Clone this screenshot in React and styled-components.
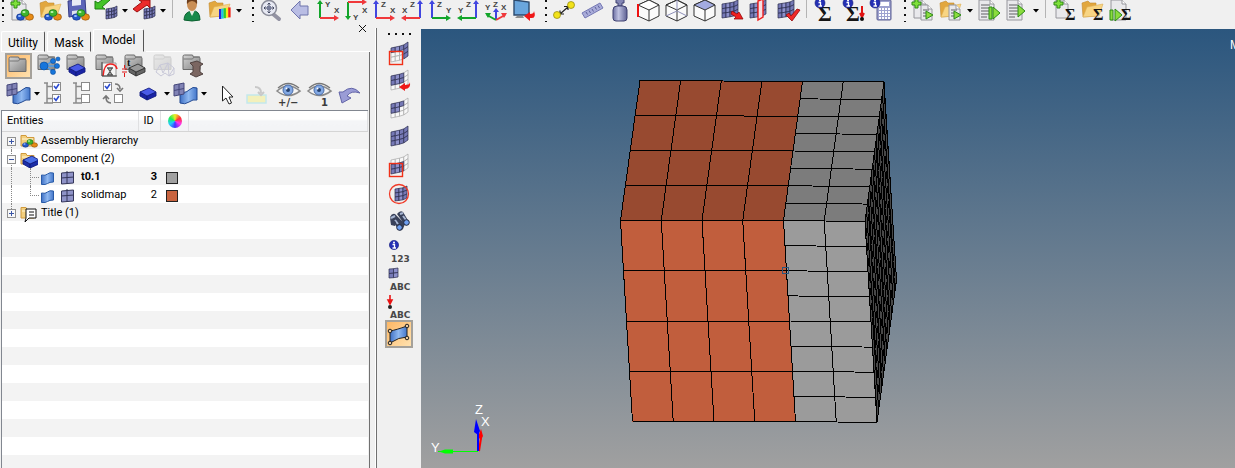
import { useState } from "react";
import styled, { createGlobalStyle, css } from "styled-components";

/* ---------- icon parts ---------- */

function Mesh({ x = 5, y = 1, w = 17, h = 14, drop = 6, cols = 4, rows = 3, open = () => false, fill = "#7679b6" }) {
    const point = (i, j) => {
        const t = i / cols;
        const lift = t < 0.7 ? t * 0.6 : 0.42 + (t - 0.7) * 1.93;
        return `${x + w * t},${y + (h * j) / rows + drop * (1 - lift)}`;
    };
    const cells = [];
    for (let i = 0; i < cols; i++) {
        for (let j = 0; j < rows; j++) {
            cells.push({ i, j, empty: open(i, j) });
        }
    }
    cells.sort((a, b) => b.empty - a.empty);
    return (
        <g strokeWidth="0.7">
            {cells.map(({ i, j, empty }) => (
                <polygon
                    key={`${i}-${j}`}
                    points={[point(i, j), point(i + 1, j), point(i + 1, j + 1), point(i, j + 1)].join(" ")}
                    fill={empty ? "#f8f8f8" : i === 1 ? "#8e91cb" : fill}
                    stroke={empty ? "#a6a6a6" : "#2a2b4c"}
                />
            ))}
        </g>
    );
}

function Sheet({ x = 4, y = 0, w = 14, h = 20 }) {
    return (
        <g>
            <path d={`M${x} ${y}h${w - 4}l4 4v${h - 4}h${-w}z`} fill="#e9e9ec" stroke="#96969c" />
            <path d={`M${x + w - 4} ${y}v4h4`} fill="#fff" stroke="#96969c" />
        </g>
    );
}

function Lines({ x = 6, y = 7, w = 8, n = 4 }) {
    return Array.from({ length: n }, (_, i) => (
        <path key={i} d={`M${x} ${y + i * 3}h${i === n - 1 ? w - 3 : w}`} stroke="#77777c" strokeWidth="1.2" />
    ));
}

function GoldFolder({ x = 4, y = 0 }) {
    return (
        <g transform={`translate(${x} ${y})`}>
            <path d="M1 17L0 3l6-2 2 2h6v13z" fill="#e2a73e" stroke="#c28a2e" strokeWidth=".6" />
            <path d="M1 17L5 7l16-3-4 12z" fill="#f8d583" stroke="#dcae55" strokeWidth=".6" />
        </g>
    );
}

function GreenPlus({ x = 3, y = -1 }) {
    return (
        <path
            transform={`translate(${x} ${y})`}
            d="M3 0h3v3h3v3H6v3H3V6H0V3h3z"
            fill="#7fe03a"
            stroke="#2e8a14"
        />
    );
}

function Balls({ x = 17, y = 13, r = 4 }) {
    return (
        <g strokeWidth=".6">
            <ellipse cx={x - 4.5} cy={y + r} rx={r} ry={r - 0.8} fill="#2457c9" stroke="#0c2c80" />
            <ellipse cx={x + 4.5} cy={y + r} rx={r} ry={r - 0.8} fill="#e88c16" stroke="#8b4c05" />
            <ellipse cx={x} cy={y} rx={r} ry={r - 0.6} fill="#3fb52f" stroke="#176a10" />
            <ellipse cx={x - 1} cy={y - 1} rx={r / 2.6} ry={r / 4} fill="#c3f3b5" stroke="none" />
            <ellipse cx={x - 5.5} cy={y + r - 1} rx={r / 2.6} ry={r / 4} fill="#9cc0ff" stroke="none" />
        </g>
    );
}

function Sigma({ x = 14, y = 20, size = 16 }) {
    return (
        <text x={x} y={y} fontFamily="Liberation Serif, serif" fontWeight="bold" fontSize={size} fill="#151515">
            Σ
        </text>
    );
}

function Info({ x = 8, y = 3, r = 5 }) {
    return (
        <g>
            <circle cx={x} cy={y} r={r} fill="#2430b4" stroke="#10187a" strokeWidth=".6" />
            <path d={`M${x - 1.5} ${y - 0.5}h2v3.5m-2 0h3.5`} stroke="#fff" strokeWidth="1.3" fill="none" />
            <circle cx={x} cy={y - 2.6} r="1" fill="#fff" />
        </g>
    );
}

function GreenPlay({ x = 15, y = 10, h = 12 }) {
    return <path d={`M${x} ${y}l7 ${h / 2}l-7 ${h / 2}z`} fill="#8bdc3d" stroke="#2c8a17" />;
}

function Block({ x = 6, y = 9, top = "#4a5be8", side = "#1a23a5", line = "#111c80" }) {
    return (
        <g transform={`translate(${x} ${y})`} stroke={line} strokeWidth=".9" strokeLinejoin="round">
            <path d="M0 5l7 4v4L0 9z" fill={side} />
            <path d="M7 9l9-4v4l-9 4z" fill={side} />
            <path d="M0 5l9-4 7 4-9 4z" fill={top} />
        </g>
    );
}

function GrayFolder({ faded }) {
    return (
        <g opacity={faded ? 0.25 : 1}>
            <path d="M5 17.5V4.5q0-1.500 1.500-1.500h8l1 2h5q1.500 0 1.500 1.500v11z" fill="url(#steel)" stroke="#6b6b6b" />
            <path d="M5.500 7h9l1.500-2h6" fill="none" stroke="#777" />
        </g>
    );
}

const AXIS = { X: "#f0383b", Y: "#12a52a", Z: "#4146e0" };

function Axes({ up, side, flip, hang }) {
    const x0 = flip ? 23 : 7;
    const dir = flip ? -1 : 1;
    const y0 = hang ? 2 : 18;
    const end = hang ? 20 : 0;
    const back = hang ? -4 : 4;
    return (
        <g strokeWidth="2" fontFamily="Liberation Sans, sans-serif" fontWeight="bold" fontSize="8">
            <path d={`M${x0} ${y0}V${end - back / -2}`} stroke={AXIS[up]} />
            <path d={`M${x0 - 3} ${end + back}h6l-3 ${-back}z`} fill={AXIS[up]} />
            <path d={`M${x0} ${y0}h${dir * 16}`} stroke={AXIS[side]} />
            <path d={`M${x0 + dir * 14} ${y0 - 3}v6l${dir * 5}-3z`} fill={AXIS[side]} />
            <text x={flip ? 13 : x0 + 5} y={hang ? 20 : 7} fill="#444">{up}</text>
            <text x={flip ? 5 : x0 + 14} y="13" fill="#444">{side}</text>
        </g>
    );
}

function Cube({ top = "none", left, inner }) {
    return (
        <g fill="#fafafa" stroke="#333" strokeLinejoin="round">
            <path d="M4 5l11-5 10 5v11l-10 5-11-5z" />
            <path d="M4 5l11-5 10 5-10 5z" fill={top} />
            <path d="M15 10v11" />
            {inner && <path d="M4 16l11-5 10 5M15 0v10" stroke="#8d8fb8" fill="none" />}
            {left && <path d="M4 4v13" stroke="#f01010" strokeWidth="2" />}
        </g>
    );
}

function Eye({ label }) {
    return (
        <g>
            <path d="M3 11Q14 1 26 11Q14 20 3 11z" fill="#f4f4f4" stroke="#8b8b8b" strokeWidth="1.6" />
            <path d="M4 8Q14-1 25 8" fill="none" stroke="#777" strokeWidth="1.3" />
            <circle cx="14" cy="10" r="5" fill="#83a9e4" stroke="#496ca8" />
            <circle cx="14" cy="10" r="2" fill="#26426f" />
            <circle cx="12.5" cy="8.5" r="1" fill="#fff" />
            <text x={label === "1" ? 16 : 4} y="26" fontSize="10" fontWeight="bold" fontFamily="DejaVu Sans, sans-serif" fill="#3c3c3c">
                {label}
            </text>
        </g>
    );
}

function CheckBox({ x, y, on }) {
    return (
        <g>
            <rect x={x} y={y} width="8" height="8" fill="#fff" stroke="#8a8a8a" />
            {on && <path d={`M${x + 1.5} ${y + 3.5}l2 2.500 3-4.500`} stroke="#2a4ad0" strokeWidth="1.600" fill="none" />}
        </g>
    );
}

function CheckTree({ on }) {
    return (
        <g>
            <path d="M6 3v20M6 6.5h7M6 18.5h7M3 3h4M3 23h9" stroke="#8a8a8a" strokeWidth="1.5" fill="none" />
            <CheckBox x={11.5} y={2.5} on={on} />
            <CheckBox x={11.5} y={14.5} on={on} />
        </g>
    );
}

function Surface() {
    return (
        <g>
            <path d="M9 11q5 3 9-1t8-2v12q-4-1-8 2t-9 1z" fill="url(#sky)" stroke="#234a93" />
            <path d="M3 5l10-2v11l-10 2zM8 4v11M3 10.5l10-2" fill="#8183b5" stroke="#45477a" />
        </g>
    );
}

function Caption({ x, y, children }) {
    return (
        <text x={x} y={y} fontSize="9" fontWeight="bold" fontFamily="DejaVu Sans, sans-serif" fill="#484848">
            {children}
        </text>
    );
}

/* ---------- toolbar icons ---------- */

const icons = {
    newModel: <><Sheet /><GreenPlus /><Balls /></>,
    openModel: <><GoldFolder /><Balls /></>,
    saveModel: (
        <>
            <path d="M4 1L21-1l1 15-17 3z" fill="#5c64b8" stroke="#353b84" />
            <path d="M8-1h9v6l-9 1z" fill="#e8eaf5" />
            <path d="M8 11l8-1v4l-8 1z" fill="#dfe2ef" />
            <Balls />
        </>
    ),
    importMesh: (
        <>
            <Mesh x={14} y={6} w={11} h={10} drop={3} />
            <path d="M3 9V1l3 2 8-6 4 3-8 7 3 2z" fill="#43c327" stroke="#1c7d10" />
        </>
    ),
    exportMesh: (
        <>
            <Mesh x={14} y={6} w={11} h={10} drop={3} />
            <path d="M3 9l9-7-3-2h11v8l-3-3-10 7z" fill="#ec2b2b" stroke="#9b1010" />
        </>
    ),
    user: (
        <>
            <path d="M6 20q0-8 8-9t8 9q-8 2-16 0z" fill="#178a4a" stroke="#0b6030" />
            <path d="M11 10l3 6 3-6z" fill="#e6efe6" />
            <ellipse cx="14" cy="4" rx="5" ry="7" fill="#c98e55" />
            <path d="M9 4q-1-7 5-7t5 7q-2-3-5-3t-5 3z" fill="#6b3d1c" />
        </>
    ),
    results: (
        <>
            <GoldFolder x={3} />
            {["#2722d8", "#17c8e8", "#29cc34", "#f5ea1a", "#f02015"].map((c, i) => (
                <path key={c} d={`M${14.2 + i * 2.3} ${9 - i * 0.4}v10`} stroke={c} strokeWidth="2.4" />
            ))}
        </>
    ),
    zoomFit: (
        <>
            <path d="M16 14l6 5" stroke="#9393a3" strokeWidth="4" strokeLinecap="round" />
            <circle cx="12" cy="8" r="7.5" fill="#e7e9f3" stroke="#8a8c99" strokeWidth="1.5" />
            <path d="M12 3v10M7 8h10M10.500 4.500L12 3l1.500 1.500M10.500 11.500L12 13l1.500-1.500M8.500 6.500L7 8l1.500 1.500M15.500 6.500L17 8l-1.500 1.500" stroke="#444a63" fill="none" />
            <rect x="10" y="6" width="4" height="4" fill="#777d99" />
        </>
    ),
    back: <path d="M6 10L15 1v5h8v9h-8v4z" fill="#b9bde4" stroke="#6f74ac" />,
    xy: <Axes up="Y" side="X" />,
    xyDown: <Axes up="Y" side="X" hang />,
    xz: <Axes up="Z" side="X" />,
    xzFlip: <Axes up="Z" side="X" flip />,
    yz: <Axes up="Z" side="Y" />,
    yzFlip: <Axes up="Z" side="Y" flip />,
    iso: (
        <g strokeWidth="2" fontFamily="Liberation Sans, sans-serif" fontWeight="bold" fontSize="8">
            <path d="M15 20V10" stroke={AXIS.Z} />
            <path d="M12 12h6l-3-4z" fill={AXIS.Z} />
            <path d="M15 20L6 15" stroke={AXIS.Y} />
            <path d="M4 13l6 0-3 5z" fill={AXIS.Y} />
            <path d="M15 20l9-5" stroke={AXIS.X} />
            <path d="M26 13l-6 0 3 5z" fill={AXIS.X} />
            <text x="4" y="10" fill="#444">Y</text>
            <text x="12" y="7" fill="#444">Z</text>
            <text x="20" y="10" fill="#444">X</text>
        </g>
    ),
    monitor: (
        <>
            <path d="M5 0l15 2v13L5 15z" fill="#6aa6dd" stroke="#2d4a6d" strokeWidth="1.4" />
            <path d="M8 16h6l1 2H6z" fill="#8c8c8c" />
            <path d="M15 16l6-4v2q4 0 4-3 3 8-4 7v3z" fill="#f01818" />
        </>
    ),
    distance: (
        <>
            <path d="M10 14l8-7M10 10.5v3.5h4M14 6.5h4V10" stroke="#222" fill="none" strokeWidth="1.2" />
            <circle cx="7" cy="15" r="3.5" fill="#f2e21a" stroke="#8d840a" strokeWidth=".7" />
            <circle cx="21" cy="5" r="3.5" fill="#f2e21a" stroke="#8d840a" strokeWidth=".7" />
        </>
    ),
    ruler: (
        <>
            <path d="M4 13L22 3l3 5L7 18z" fill="#a9acd9" stroke="#7578b4" />
            <path d="M8 12l1.500 2.500M11 10.500l1.500 2.500M14 9l1.500 2.500M17 7l1.500 2.500M20 5.500L21.500 8" stroke="#5c5f9c" />
        </>
    ),
    mass: (
        <>
            <path d="M10-1h8v4h-2v3h-4V3h-2z" fill="#8487b4" stroke="#3e4170" />
            <path d="M7 10q0-4 4-4h6q4 0 4 4v8q0 3-3 3h-8q-3 0-3-3z" fill="url(#iron)" stroke="#3e4170" />
        </>
    ),
    cubeEdge: <Cube left top="#fff" />,
    cubeWire: <Cube inner top="none" />,
    cubeShade: <Cube top="#a3abe0" />,
    meshExport: (
        <>
            <Mesh x={4} y={0} w={16} h={14} drop={4} />
            <path d="M14 11l5 3 2-2 4 7-9 0 2-2-5-3z" fill="#f02020" stroke="#930b0b" strokeWidth=".8" />
        </>
    ),
    meshSplit: (
        <>
            <Mesh x={4} y={0} w={16} h={14} drop={4} />
            <path d="M12 1l5-2v18l-5 3z" fill="#f6dfe3" stroke="#f02020" strokeWidth="1.4" />
        </>
    ),
    meshCheck: (
        <>
            <Mesh x={4} y={0} w={16} h={14} drop={4} />
            <path d="M12 15l3-2 2 3 6-7 3 1-8 11z" fill="#f02828" stroke="#930b0b" strokeWidth=".8" />
        </>
    ),
    infoSum: <><Sigma x={6} y={21} size={21} /><Info /></>,
    infoSumAlert: (
        <>
            <Sigma x={6} y={21} size={21} />
            <Info />
            <path d="M22 6v10m-2-3l2 4 2-4" stroke="#e01414" strokeWidth="2" fill="none" />
            <circle cx="22" cy="19" r="2" fill="#111" />
        </>
    ),
    calc: (
        <>
            <rect x="9" y="0" width="14" height="20" rx="1" fill="#9ea2cf" stroke="#5d6093" />
            <rect x="11" y="2" width="10" height="4" fill="#fff" />
            <path d="M11 9h11M11 12h11M11 15h11M11 18h11" stroke="#fff" strokeWidth="2" strokeDasharray="2 1" />
            <Info x={7} y={3} r={5} />
        </>
    ),
    sheetNewRun: <><Sheet x={5} w={12} h={18} /><Sheet x={12} y={5} w={11} h={15} /><Lines x={14} y={10} w={6} n={3} /><GreenPlus x={3} y={-1} /><GreenPlay x={17} y={11} h={8} /></>,
    sheetOpenRun: <><GoldFolder x={3} /><Sheet x={12} y={5} w={11} h={15} /><Lines x={14} y={10} w={6} n={3} /><GreenPlay x={17} y={11} h={8} /></>,
    runPause: <><Sheet x={4} w={15} h={20} /><Lines x={6} y={5} w={9} n={5} /><path d="M14 7h3v12h-3z" fill="#8bdc3d" stroke="#2c8a17" /><GreenPlay x={18} y={7} /></>,
    run: <><Sheet x={4} w={15} h={20} /><Lines x={6} y={5} w={9} n={5} /><GreenPlay x={15} y={5} /></>,
    sumNew: <><Sheet x={5} w={12} h={18} /><GreenPlus x={3} y={-1} /><Sigma /></>,
    sumOpen: <><GoldFolder x={3} /><Sigma /></>,
    sumRun: <><Sheet x={4} w={15} h={20} /><path d="M3 10h3v10H3z" fill="#8bdc3d" stroke="#2c8a17" /><GreenPlay x={8} y={9} /><Sigma /></>,
};

/* ---------- browser icons ---------- */

const viewIcons = {
    component: <g transform="translate(0 2)"><GrayFolder /></g>,
    connect: (
        <>
            <GrayFolder />
            <path d="M12 14l8-5M12 14l12 0M12 14l8 6" stroke="#4b9be8" strokeWidth="1.5" />
            {[[11, 14, 4], [20, 9, 2.5], [24, 14, 2.5], [20, 20, 2.5], [25, 7, 2]].map(([x, y, r]) => (
                <circle key={`${x}${y}`} cx={x} cy={y} r={r} fill="#1675dc" stroke="#0c4b99" strokeWidth=".6" />
            ))}
        </>
    ),
    solid: <><GrayFolder /><Block x={7} y={11} /></>,
    material: (
        <>
            <GrayFolder />
            <path d="M11 24V11h14v13z" fill="#f5f5f5" stroke="#999" />
            <path d="M12 24q1-12 7-12t7 5" fill="none" stroke="#f02020" strokeWidth="1.6" />
            <path d="M11 10v14h15" fill="none" stroke="#444" />
            <path d="M16 23h6M16 16h6M17 16l4 7M21 16l-4 7" stroke="#555" strokeWidth="1.3" />
        </>
    ),
    property: (
        <>
            <GrayFolder />
            <Block x={9} y={11} top="#9a9a9a" side="#666" line="#333" />
            <text x="7" y="14" fontSize="10" fontWeight="bold" fontFamily="Liberation Serif, serif" fill="#111">t</text>
            <path d="M2 17h5M2 20h5M4.500 13v3M4.500 21v4" stroke="#e01818" />
        </>
    ),
    loads: (
        <>
            <GrayFolder faded />
            <path d="M7 20l4-7 8-2 6 5v6l-5 2-4-3-4 3zM11 13l3 8 5-10 1 13 5-8" fill="none" stroke="#c8c8d8" />
        </>
    ),
    beam: (
        <>
            <GrayFolder />
            <path d="M12 11l7-2 6 3-3 2v6l3 2-7 3-6-3 3-2v-6z" fill="#7b6661" stroke="#514341" />
        </>
    ),
};

const sideIcons = [
    ["Mask elements", <><Mesh x={6} y={2} open={(i, j) => i < 3 && j > 0} /><rect x="4.5" y="11.5" width="13" height="13" fill="none" stroke="#f03018" strokeWidth="1.4" /></>],
    ["Reverse mask", <><Mesh x={6} y={2} open={(i, j) => i > 2 || j > 1} /><path d="M14 19l6-4v2q5 0 5-3 1 7-5 7v2z" fill="#f01818" /></>],
    ["Unmask adjacent", <Mesh x={6} y={2} open={(i, j) => i > 2 || j > 1 || (i === 2 && j > 0)} />],
    ["Unmask all", <Mesh x={6} y={2} />],
    ["Unmask shown", <><Mesh x={6} y={2} open={(i, j) => j < 1 || i > 2} /><rect x="4.5" y="11.5" width="13" height="13" fill="none" stroke="#f03018" strokeWidth="1.4" /></>],
    ["Spherical clipping", <><Mesh x={10} y={6} w={12} h={12} drop={3} cols={3} /><circle cx="14" cy="14" r="9.5" fill="none" stroke="#f03a28" strokeWidth="1.3" /></>],
    [
        "Find",
        <>
            <path d="M5 9q2-4 5-3l10 10-2 5q-3 3-5 0zM12 6q3-4 6-2l6 10q0 4-4 3z" fill="#39415a" />
            <path d="M6 10l4-2M15 6l3-1M10 12l3 4M18 8l3 4" stroke="#a8b6d3" strokeWidth="2" />
            <path d="M5 10l1 7 4 1 1-4z" fill="#39415a" />
            <circle cx="21.5" cy="14.5" r="2.800" fill="#6f9ff0" stroke="#20263a" />
            <circle cx="14.5" cy="19.5" r="2.800" fill="#6f9ff0" stroke="#20263a" />
        </>,
    ],
    ["Numbers", <><Info x={9} y={9} r={4.6} /><Caption x="6" y="26">123</Caption></>],
    ["Element handles", <><Mesh x={4} y={4} w={9} h={9} drop={1} cols={2} rows={2} /><Caption x="5" y="26">ABC</Caption></>],
    ["Load handles", <><path d="M5 3v8M3 8l2 4 2-4z" stroke="#e81414" strokeWidth="1.6" fill="#e81414" /><circle cx="5" cy="15" r="2" fill="#222" /><Caption x="5" y="26">ABC</Caption></>],
    [
        "Fixed points",
        <>
            <path d="M5 11q6-1 17-5v11q-8 0-17 6z" fill="url(#sky)" stroke="#222" />
            {[[5, 11], [22, 6], [22, 18], [5, 23]].map(([x, y]) => (
                <circle key={`${x}${y}`} cx={x} cy={y} r="1.8" fill="#e9c9a0" stroke="#222" />
            ))}
        </>,
    ],
];

/* ---------- toolbar contents ---------- */

const toolGroups = [
    ["newModel", "openModel", "saveModel", "importMesh", "menu", "exportMesh", "menu", "line", "user", "results", "menu"],
    ["zoomFit", "back", "xy", "xyDown", "xz", "xzFlip", "yz", "yzFlip", "iso", "monitor"],
    ["distance", "ruler", "mass", "cubeEdge", "cubeWire", "cubeShade", "meshExport", "meshSplit", "meshCheck", "line", "infoSum", "infoSumAlert", "calc"],
    ["sheetNewRun", "sheetOpenRun", "menu", "runPause", "run", "menu", "line", "sumNew", "sumOpen", "sumRun"],
];

function Arrow() {
    return (
        <svg width="6" height="4" viewBox="0 0 6 4">
            <path d="M0 0h6L3 3.500z" fill="#000" />
        </svg>
    );
}

function Tool({ name }) {
    if (name === "line") return <Separator />;
    if (name === "menu") return <MenuButton aria-label="More options"><Arrow /></MenuButton>;
    return (
        <ToolButton aria-label={name}>
            <svg width="28" height="22" viewBox="0 0 28 22" fill="none">{icons[name]}</svg>
        </ToolButton>
    );
}

/* ---------- model tree ---------- */

function TreeFolder({ kind }) {
    return (
        <svg width="18" height="18" viewBox="0 0 18 18" fill="none">
            <path d="M1 14V3.500h5l1 2h7V14z" fill="#f3cf7d" stroke="#d09a3c" />
            <path d="M2 7h11" stroke="#fbe9b8" strokeWidth="1.5" />
            {kind === "assembly" && <Balls x={10} y={10} r={3} />}
            {kind === "component" && <Block x={3} y={5} top="#4a6fe8" side="#1c2fa8" />}
            {kind === "title" && <path d="M6 5h10v9H9l-4 4 1-4zM9 8h5M9 11h5" fill="#fff" stroke="#111" />}
        </svg>
    );
}

function Group({ kind, label, open, first, last, onToggle }) {
    return (
        <tr>
            <td>
                <TreeCell>
                    <Guide $first={first} $last={last}>
                        <Expander aria-label={`Toggle ${label}`} onClick={onToggle}>
                            <svg width="7" height="7" viewBox="0 0 7 7" shapeRendering="crispEdges">
                                <path d={open ? "M1 3h5v1H1z" : "M1 3h5v1H1zM3 1h1v5H3z"} fill="#3a55a5" />
                            </svg>
                        </Expander>
                    </Guide>
                    <TreeFolder kind={kind} />
                    <Label>{label}</Label>
                </TreeCell>
            </td>
            <td /><td /><td />
        </tr>
    );
}

function Part({ name, id, color, active, last }) {
    return (
        <tr>
            <td>
                <TreeCell>
                    <Guide />
                    <Branch $last={last} />
                    <svg width="38" height="18" viewBox="0 0 38 18" fill="none">
                        <path d="M1.500 7q4 1 6-1t6-1v9q-4 0-6 1.500t-6 1z" fill="url(#sky)" stroke="#2a5ca8" />
                        <path d="M21.500 5l12-1v11l-12 1zM27 3v13M21 10l13-1" fill="#8f93c8" stroke="#34365a" />
                    </svg>
                    <Label $bold={active}>{name}</Label>
                </TreeCell>
            </td>
            <IdCell $bold={active}>{id}</IdCell>
            <td><Swatch $color={color} /></td>
            <td />
        </tr>
    );
}

const parts = [
    { name: "t0.1", id: 3, color: "#a0a0a0", active: true },
    { name: "solidmap", id: 2, color: "#c86440" },
];

function ModelTree() {
    const [open, setOpen] = useState(true);
    return (
        <TreeBox>
            <TreeTable>
                <colgroup>
                    <Column $width="136px" />
                    <Column $width="22px" />
                    <Column $width="28px" />
                    <Column />
                </colgroup>
                <thead>
                    <tr>
                        <th>Entities</th>
                        <th>ID</th>
                        <th aria-label="Color"><ColorWheel /></th>
                        <th aria-label="Other" />
                    </tr>
                </thead>
                <tbody>
                    <Group kind="assembly" label="Assembly Hierarchy" first />
                    <Group kind="component" label="Component (2)" open={open} onToggle={() => setOpen(!open)} />
                    {open && parts.map((p, i) => <Part key={p.id} {...p} last={i === parts.length - 1} />)}
                    <Group kind="title" label="Title (1)" last />
                </tbody>
            </TreeTable>
        </TreeBox>
    );
}

/* ---------- 3D scene ---------- */

const mix = (a, b, t) => [a[0] + (b[0] - a[0]) * t, a[1] + (b[1] - a[1]) * t];

function Face({ corners, cols, rows, fill }) {
    const [a, b, c, d] = corners;
    const lines = [];
    for (let i = 0; i <= cols; i++) lines.push([mix(a, b, i / cols), mix(d, c, i / cols)]);
    for (let j = 0; j <= rows; j++) lines.push([mix(a, d, j / rows), mix(b, c, j / rows)]);
    return (
        <g shapeRendering="crispEdges">
            <polygon points={corners.join(" ")} fill={fill} />
            <path d={lines.map(([p, q]) => `M${p}L${q}`).join("")} stroke="#000" fill="none" />
        </g>
    );
}

function Scene() {
    return (
        <svg width="814" height="439" viewBox="421 29 814 439">
            <Face corners={[[884, 82], [896.5, 280], [877, 422], [865, 221]]} cols={13} rows={12} fill="#484848" />
            <Face corners={[[640, 80.5], [802.5, 81.5], [783.5, 220.5], [620.5, 220.5]]} cols={4} rows={4} fill="#984a30" />
            <Face corners={[[802.5, 81.5], [884, 82], [865, 221.5], [783.5, 220.5]]} cols={2} rows={8} fill="#7c7c7c" />
            <Face corners={[[620.5, 220.5], [783.5, 220.5], [795.5, 421.5], [632.5, 421.5]]} cols={4} rows={4} fill="#c15e3d" />
            <Face corners={[[783.5, 220.5], [865, 221.5], [877, 422.5], [795.5, 421.5]]} cols={2} rows={8} fill="#9b9b9b" />
            <rect x="782.5" y="267.5" width="6" height="6" fill="none" stroke="#2b567e" />
            <g fill="none">
                <path d="M438 451h40v1h-40z" fill="#0f0" />
                <path d="M439 451.5l6-2h8v4h-8z" fill="#0f0" />
                <path d="M479 451l2-13" stroke="#f00" strokeWidth="2" />
                <path d="M478 437l3-8 2 7-2 4z" fill="#f00" />
                <path d="M478 451V431" stroke="#00f" strokeWidth="2" />
                <path d="M474 432l2-13 4 12-2 4z" fill="#00f" />
            </g>
            <g fill="#fff" fontFamily="Liberation Sans, sans-serif" fontSize="13">
                <text x="431" y="452">Y</text>
                <text x="475" y="414">Z</text>
                <text x="481" y="426">X</text>
            </g>
        </svg>
    );
}

function Gradients() {
    return (
        <Defs aria-hidden="true">
            <linearGradient id="steel" x1="0" y1="0" x2="1" y2="1">
                <stop offset="0" stopColor="#d4d4d4" />
                <stop offset="1" stopColor="#848484" />
            </linearGradient>
            <linearGradient id="sky" x1="0" y1="0" x2="1" y2="0">
                <stop offset="0" stopColor="#3f70c4" />
                <stop offset="0.5" stopColor="#8fb8f0" />
                <stop offset="1" stopColor="#4376ca" />
            </linearGradient>
            <linearGradient id="iron" x1="0" y1="0" x2="1" y2="0">
                <stop offset="0" stopColor="#6c6fa2" />
                <stop offset="0.4" stopColor="#c0c3e2" />
                <stop offset="1" stopColor="#5d6092" />
            </linearGradient>
        </Defs>
    );
}

function BrowserButton({ label, selected, wide, onClick, children }) {
    return (
        <ViewButton aria-label={label} $selected={selected} $wide={wide} onClick={onClick}>
            <svg width="29" height="28" viewBox="0 0 29 28" fill="none">{children}</svg>
        </ViewButton>
    );
}

export default function App() {
    const [tab, setTab] = useState("Model");
    const [view, setView] = useState("component");

    return (
        <Page>
            <GlobalStyle />
            <Gradients />
            <Toolbar>
                {toolGroups.map((tools, g) => (
                    <ToolGroup key={g}>
                        <Handle $first={g === 0} />
                        {tools.map((name, i) => <Tool key={i} name={name} />)}
                    </ToolGroup>
                ))}
            </Toolbar>
            <Body>
                <Browser>
                    <TabBar role="tablist">
                        {["Utility", "Mask", "Model"].map((name) => (
                            <Tab key={name} role="tab" aria-selected={tab === name} $active={tab === name} onClick={() => setTab(name)}>
                                {name}
                            </Tab>
                        ))}
                        <TabFill />
                        <CloseButton aria-label="Close">
                            <svg width="7" height="7" viewBox="0 0 7 7">
                                <path d="M0 0l7 7M7 0L0 7" stroke="#111" />
                            </svg>
                        </CloseButton>
                    </TabBar>
                    <Panel>
                        <ViewBar>
                            {Object.keys(viewIcons).map((name) => (
                                <BrowserButton key={name} label={name} selected={view === name} onClick={() => setView(name)}>
                                    {viewIcons[name]}
                                </BrowserButton>
                            ))}
                        </ViewBar>
                        <ViewBar>
                            <BrowserButton label="Elements and geometry"><Surface /></BrowserButton>
                            <SmallMenu aria-label="Display type"><Arrow /></SmallMenu>
                            <BrowserButton label="Show all"><CheckTree on /></BrowserButton>
                            <BrowserButton label="Show none"><CheckTree /></BrowserButton>
                            <BrowserButton label="Reverse shown">
                                <CheckBox x={4.5} y={2.5} on />
                                <CheckBox x={15.5} y={14.5} />
                                <path d="M16 4q5 0 5 5m-3-1l3 3 3-3M12 23q-5 0-5-6m-3 2l3-3 3 3" stroke="#777" strokeWidth="1.6" />
                            </BrowserButton>
                            <Space $width={4} />
                            <BrowserButton label="Components"><Block x={6} y={7} /></BrowserButton>
                            <SmallMenu aria-label="Entity type"><Arrow /></SmallMenu>
                            <BrowserButton label="Both"><Surface /></BrowserButton>
                            <SmallMenu aria-label="Selection type"><Arrow /></SmallMenu>
                            <Space $width={32}>
                                <svg width="32" height="26" viewBox="0 0 32 26">
                                    <path d="M13.500 5v15l3.500-3 3 6 2.500-1-2.500-6h4z" fill="#fff" stroke="#222" />
                                </svg>
                            </Space>
                            <BrowserButton label="Add to panel" wide>
                                <rect x="4" y="15" width="19" height="8" fill="#f3f0bb" stroke="#c4e8ec" strokeWidth="1.5" />
                                <path d="M12 7q6 0 6 6m-3-1l3 3 3-3" stroke="#c8c8c8" strokeWidth="2" />
                            </BrowserButton>
                            <BrowserButton label="Show and hide" wide><Eye label="+/−" /></BrowserButton>
                            <BrowserButton label="Isolate" wide><Eye label="1" /></BrowserButton>
                            <BrowserButton label="Undo" wide>
                                <path d="M3 12l3 11 9-5-4-2q4-6 13-3-8-9-17-1z" fill="#9a9cd6" stroke="#6365a8" />
                            </BrowserButton>
                        </ViewBar>
                        <ModelTree />
                    </Panel>
                </Browser>
                <SideBar>
                    <Dots />
                    {sideIcons.map(([label, icon], i) => (
                        <SideButton key={label} aria-label={label} $selected={i === sideIcons.length - 1}>
                            <svg width="28" height="28" viewBox="0 0 28 28" fill="none">{icon}</svg>
                        </SideButton>
                    ))}
                </SideBar>
                <Viewport>
                    <Scene />
                    <ModelInfo>M</ModelInfo>
                </Viewport>
            </Body>
        </Page>
    );
}

/* ---------- styles ---------- */

const GlobalStyle = createGlobalStyle`
    body {
        margin: 0;
        background-color: #f0f0f0;
        font-family: Roboto, "Liberation Sans", sans-serif;
        font-size: 11px;
        color: #000;
        overflow: hidden;
    }
    button {
        font: inherit;
        color: inherit;
        padding: 0;
        border: 0;
        background: none;
    }
    svg {
        display: block;
        flex: none;
    }
`;

const Page = styled.div`
    display: flex;
    flex-direction: column;
    height: 100vh;
`;

const Defs = styled.svg`
    position: absolute;
    width: 0;
    height: 0;
`;

const Toolbar = styled.header`
    display: flex;
    flex: none;
    height: 24px;
    overflow: hidden;
`;

const ToolGroup = styled.div`
    display: flex;
    flex: none;
`;

const Handle = styled.span`
    width: ${(p) => (p.$first ? "8px" : "13px")};
    height: 22px;
    background: repeating-linear-gradient(#111 0 2px, transparent 2px 7px) ${(p) => (p.$first ? "2px" : "8px")} 0 / 2px 22px no-repeat;
`;

const ToolButton = styled.button`
    width: 28px;
    height: 22px;
    overflow: hidden;
`;

const MenuButton = styled.button`
    display: flex;
    align-items: center;
    justify-content: center;
    width: 10px;
    height: 22px;
`;

const Separator = styled.span`
    width: 1px;
    height: 18px;
    margin: 0 5px 0 4px;
    background-color: #b4b4b4;
`;

const Body = styled.main`
    display: flex;
    flex: 1;
    min-height: 0;
`;

const Browser = styled.aside`
    display: flex;
    flex-direction: column;
    flex: 0 0 370px;
`;

const TabBar = styled.div`
    position: relative;
    display: flex;
    align-items: flex-end;
    height: 28px;
    padding-left: 1px;
`;

const Tab = styled.button`
    box-sizing: border-box;
    min-width: 44px;
    height: ${(p) => (p.$active ? "23px" : "21px")};
    padding: ${(p) => (p.$active ? "0 8px 2px" : "2px 5px 0")};
    margin-right: 2px;
    font-size: 12px;
    border-top: 1px solid #fff;
    border-left: 1px solid #fff;
    border-right: 1px solid #555;
    border-bottom: 1px solid ${(p) => (p.$active ? "#f0f0f0" : "#fff")};
    border-radius: 2px 2px 0 0;
`;

const TabFill = styled.span`
    flex: 1;
    border-bottom: 1px solid #fff;
`;

const CloseButton = styled.button`
    position: absolute;
    top: 1px;
    right: 4px;
`;

const Panel = styled.section`
    display: flex;
    flex-direction: column;
    flex: 1;
    min-height: 0;
    gap: 2px;
    padding: 1px 1px 0 1px;
    border-right: 1px solid #707070;
`;

const ViewBar = styled.div`
    display: flex;
    align-items: center;
    gap: 2px;
    height: 26px;
    padding-left: 4px;
`;

const selectedButton = css`
    border: 2px solid #a5a19a;
    background: linear-gradient(135deg, #fdb765, #ffe2b0);
`;

const ViewButton = styled.button`
    display: flex;
    align-items: center;
    justify-content: center;
    flex: none;
    box-sizing: border-box;
    width: ${(p) => (p.$wide ? "29px" : "27px")};
    height: 26px;
    ${(p) => p.$selected && selectedButton}
`;

const SmallMenu = styled.button`
    display: flex;
    align-items: center;
    width: 6px;
    height: 26px;
`;

const Space = styled.span`
    width: ${(p) => p.$width}px;
`;

const TreeBox = styled.div`
    flex: 1;
    min-height: 0;
    overflow: hidden;
    margin-top: 1px;
    border-top: 1px solid #828790;
    border-left: 1px solid #828790;
    background: repeating-linear-gradient(#f3f3f3 0 18px, #fff 18px 36px) 0 20px;
`;

const TreeTable = styled.table`
    width: 100%;
    table-layout: fixed;
    border-collapse: collapse;

    th {
        height: 20px;
        box-sizing: border-box;
        padding: 0 5px;
        font-weight: normal;
        text-align: left;
        background: linear-gradient(#fff 0 40%, #f4f5f7 50%, #f2f3f5);
        border-right: 1px solid #dfe0e2;
        border-bottom: 1px solid #d5d5d5;
    }
    td {
        height: 18px;
        padding: 0;
        white-space: nowrap;
    }
`;

const Column = styled.col`
    width: ${(p) => p.$width || "auto"};
`;

const ColorWheel = styled.span`
    display: block;
    width: 14px;
    height: 14px;
    margin-left: 2px;
    border-radius: 50%;
    background: conic-gradient(from 60deg, #f33, #f3e, #43f, #2cf, #2e5, #ee2, #f33);
`;

const TreeCell = styled.div`
    display: flex;
    align-items: center;
    height: 18px;
`;

const Guide = styled.span`
    position: relative;
    flex: none;
    width: 18px;
    height: 18px;

    &::before {
        content: "";
        position: absolute;
        left: 9px;
        top: ${(p) => (p.$first ? "9px" : "0")};
        height: ${(p) => (p.$first || p.$last ? "9px" : "18px")};
        border-left: 1px dotted #888;
    }
`;

const Expander = styled.button`
    position: absolute;
    left: 5px;
    top: 5px;
    display: flex;
    align-items: center;
    justify-content: center;
    box-sizing: border-box;
    width: 9px;
    height: 9px;
    background: #f8f8f8;
    box-shadow: inset 0 0 0 1px #919191;
`;

const Branch = styled.span`
    position: relative;
    flex: none;
    width: 20px;
    height: 18px;

    &::before {
        content: "";
        position: absolute;
        left: 10px;
        top: 0;
        width: 8px;
        height: 9px;
        border-left: 1px dotted #888;
        border-bottom: 1px dotted #888;
    }
    &::after {
        content: "";
        position: absolute;
        left: 10px;
        top: 9px;
        height: ${(p) => (p.$last ? "0" : "9px")};
        border-left: 1px dotted #888;
    }
`;

const Label = styled.span`
    padding-left: 3px;
    line-height: 18px;
    font-weight: ${(p) => (p.$bold ? "bold" : "normal")};
`;

const IdCell = styled.td`
    && {
        padding-right: 3px;
    }
    text-align: right;
    font-weight: ${(p) => (p.$bold ? "bold" : "normal")};
`;

const Swatch = styled.span`
    display: block;
    box-sizing: border-box;
    width: 12px;
    height: 12px;
    margin: 2px 0 0 6px;
    border: 1px solid #222;
    background-color: ${(p) => p.$color};
`;

const SideBar = styled.nav`
    display: flex;
    flex-direction: column;
    align-items: center;
    flex: none;
    box-sizing: border-box;
    width: 45px;
    margin: 4px 0 0 6px;
    border-left: 1px solid #707070;
    box-shadow: -1px 0 #fff;
`;

const Dots = styled.span`
    width: 23px;
    height: 2px;
    margin: 5px 0;
    background: repeating-linear-gradient(90deg, #111 0 2px, transparent 2px 7px);
`;

const SideButton = styled.button`
    display: flex;
    align-items: center;
    justify-content: center;
    box-sizing: border-box;
    width: 28px;
    height: 28px;
    ${(p) => p.$selected && selectedButton}
`;

const Viewport = styled.section`
    position: relative;
    flex: 1;
    min-width: 0;
    margin-top: 5px;
    overflow: hidden;
    background: linear-gradient(#2b567e, #a0a0a0);
`;

const ModelInfo = styled.span`
    position: absolute;
    top: 9px;
    right: -5px;
    font-family: "Liberation Sans", sans-serif;
    font-size: 12px;
    color: #fff;
`;
